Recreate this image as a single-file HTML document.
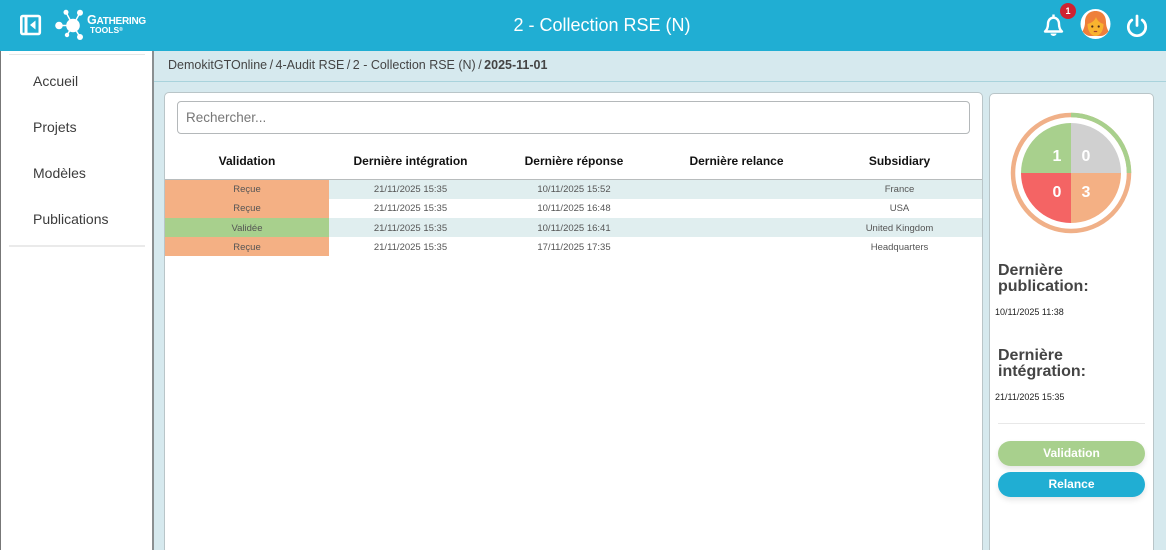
<!DOCTYPE html>
<html lang="fr"><head><meta charset="utf-8"><title>2 - Collection RSE (N)</title>
<style>
*{box-sizing:border-box}
html,body{margin:0;padding:0;width:1166px;height:550px;overflow:hidden;background:#d6e9ee;font-family:"Liberation Sans",sans-serif}
#w{position:relative;width:1166px;height:550px;overflow:hidden;background:#d6e9ee}
.a{position:absolute}
.top{left:0;top:0;width:1166px;height:51px;background:#20aed3}
.title{left:0;top:14px;width:1204px;text-align:center;color:#fff;font-size:18px;line-height:22px}
.side{left:1px;top:51px;width:153px;height:499px;background:#fff;border-right:2px solid #8a8f91}
.edge{left:0;top:51px;width:1px;height:499px;background:#777}
.nav{left:33px;color:#3c3c3c;font-size:14px;line-height:18px}
.crumb{left:168px;top:58px;font-size:12.5px;line-height:15px;color:#444;white-space:nowrap}
.crumb i{font-style:normal;margin:0 -1px}
.crumbline{left:154px;top:81px;width:1012px;height:1px;background:#a9d3dc}
.card{background:#fff;border:1px solid #b9c5c8;border-radius:5px}
.search{left:177px;top:101px;width:793px;height:33px;border:1px solid #b4b8ba;border-radius:4px;padding-left:8px;font-size:13.5px;line-height:31px;color:#777}
.th{top:154px;text-align:center;font-weight:bold;font-size:12px;line-height:15px;color:#111}
.row{left:165px;width:817px;height:19px}
.c{position:absolute;top:0;height:19px;overflow:hidden;text-align:center;font-size:9.5px;line-height:19px;color:#555;white-space:nowrap}
.low .c{line-height:21px}
h4{position:absolute;margin:0;left:998px;font-size:16px;line-height:16px;font-weight:bold;color:#444}
.d{left:995px;font-size:9px;line-height:12px;color:#222}
.btn{left:998px;width:147px;height:25px;border-radius:13px;color:#fff;text-align:center;font-size:12px;font-weight:bold;line-height:25px;box-shadow:0 3px 6px rgba(0,0,0,.1)}
</style></head><body><div id="w">
<div class="a top"></div>
<svg class="a" style="left:19px;top:14px" width="23" height="22" viewBox="0 0 23 22"><rect x="2.300" y="2" width="18.500" height="18" rx="1.500" fill="none" stroke="#fff" stroke-width="2.600"/><rect x="5.500" y="3" width="3" height="16" fill="#fff"/><path d="M16.500 6.500v9L11 11z" fill="#fff"/></svg>
<svg class="a" style="left:54px;top:9px" width="34" height="32" viewBox="0 0 34 32"><g stroke="#fff" stroke-width="1.500"><path d="M19 16.500L5 16.500M19 16.500L26 3.700M19 16.500L12 3.300M19 16.500L26 28M19 16.500L13 26"/></g><g fill="#fff"><circle cx="19" cy="16.500" r="6.800"/><circle cx="5" cy="16.500" r="3.800"/><circle cx="26" cy="3.700" r="3"/><circle cx="12" cy="3.300" r="2.500"/><circle cx="26" cy="28" r="3"/><circle cx="13" cy="26" r="2.200"/></g></svg>
<div class="a" style="left:87px;top:15px;color:#fff;font-weight:bold;font-size:10px;line-height:11px;letter-spacing:-.25px;white-space:nowrap"><span style="font-size:12.500px">G</span>ATHERING</div>
<div class="a" style="left:90px;top:25px;color:#fff;font-weight:bold;font-size:8.500px;line-height:10px;white-space:nowrap">TOOLS<span style="font-size:5px;vertical-align:top">®</span></div>
<div class="a title">2 - Collection RSE (N)</div>
<svg class="a" style="left:1042px;top:13px" width="23" height="24" viewBox="0 0 23 24"><path d="M3 18.500c2.300-2 3-4 3-7.500 0-3.800 2.300-6.300 5.500-6.300S17 7.200 17 11c0 3.500.7 5.500 3 7.500z" fill="none" stroke="#fff" stroke-width="2.400" stroke-linejoin="round"/><path d="M8.500 20.500a3 2.500 0 0 0 6 0z" fill="#fff"/><rect x="10.300" y="1.500" width="2.400" height="3.500" fill="#fff"/></svg>
<div class="a" style="left:1060px;top:3px;width:16px;height:16px;border-radius:50%;background:#cf2231;color:#fff;font-size:9px;font-weight:bold;text-align:center;line-height:16px">1</div>
<svg class="a" style="left:1080px;top:9px" width="31" height="30" viewBox="0 0 31 30"><circle cx="15.500" cy="15" r="15" fill="#fff"/><path d="M15.500 2C8.500 2 5 7 5 13c0 4.500-1.500 7-2.500 9.500C5 25.500 8 27 10 27h11c2 0 5-1.500 7.500-4.500C27.500 20 26 17.500 26 13c0-6-3.500-11-10.500-11z" fill="#ee7f3a"/><path d="M7.500 15c0 7.500 4 12 8 12s8-4.500 8-12c-3.500-1-6.500-3.500-7.500-7-1 3.500-4.500 6-8.500 7z" fill="#f9b32f"/><circle cx="12.300" cy="17.500" r="1.100" fill="#4b2a1a"/><circle cx="18.700" cy="17.500" r="1.100" fill="#4b2a1a"/><path d="M13.800 22.500h3.400" stroke="#a8442a" stroke-width="1.200"/></svg>
<svg class="a" style="left:1126px;top:13px" width="22" height="24" viewBox="0 0 22 24"><path d="M11 3v9.500" stroke="#fff" stroke-width="2.700" stroke-linecap="round" fill="none"/><path d="M5.800 7a8.700 8.700 0 1 0 10.400 0" stroke="#fff" stroke-width="2.700" stroke-linecap="round" fill="none"/></svg>

<div class="a edge"></div>
<div class="a side"></div>
<div class="a" style="left:9px;top:54px;width:136px;height:1px;background:#e6e6e6"></div>
<div class="a nav" style="top:72px">Accueil</div>
<div class="a nav" style="top:118px">Projets</div>
<div class="a nav" style="top:164px">Modèles</div>
<div class="a nav" style="top:210px">Publications</div>
<div class="a" style="left:9px;top:245px;width:136px;height:2px;background:#eaeaea"></div>

<div class="a crumb">DemokitGTOnline <i>/</i> 4-Audit RSE <i>/</i> 2 - Collection RSE (N) <i>/</i> <b>2025-11-01</b></div>
<div class="a crumbline"></div>

<div class="a card" style="left:164px;top:92px;width:819px;height:470px"></div>
<div class="a search">Rechercher...</div>
<div class="a th" style="left:165px;width:164px">Validation</div>
<div class="a th" style="left:329px;width:163px">Dernière intégration</div>
<div class="a th" style="left:492px;width:164px">Dernière réponse</div>
<div class="a th" style="left:656px;width:161px">Dernière relance</div>
<div class="a th" style="left:817px;width:165px">Subsidiary</div>
<div class="a" style="left:165px;top:179px;width:817px;height:1px;background:#b8bcbd"></div>

<div class="a row" style="top:180px;background:#e0eeef"><div class="c" style="left:0;width:164px;background:#f4b084">Reçue</div><div class="c" style="left:164px;width:163px">21/11/2025 15:35</div><div class="c" style="left:327px;width:164px">10/11/2025 15:52</div><div class="c" style="left:652px;width:165px">France</div></div>
<div class="a row" style="top:199px;background:#fff"><div class="c" style="left:0;width:164px;background:#f4b084">Reçue</div><div class="c" style="left:164px;width:163px">21/11/2025 15:35</div><div class="c" style="left:327px;width:164px">10/11/2025 16:48</div><div class="c" style="left:652px;width:165px">USA</div></div>
<div class="a row low" style="top:218px;background:#e0eeef"><div class="c" style="left:0;width:164px;background:#a8d08d">Validée</div><div class="c" style="left:164px;width:163px">21/11/2025 15:35</div><div class="c" style="left:327px;width:164px">10/11/2025 16:41</div><div class="c" style="left:652px;width:165px">United Kingdom</div></div>
<div class="a row low" style="top:237px;background:#fff"><div class="c" style="left:0;width:164px;background:#f4b084">Reçue</div><div class="c" style="left:164px;width:163px">21/11/2025 15:35</div><div class="c" style="left:327px;width:164px">17/11/2025 17:35</div><div class="c" style="left:652px;width:165px">Headquarters</div></div>

<div class="a card" style="left:989px;top:93px;width:165px;height:470px"></div>
<svg class="a" style="left:1010px;top:112px" width="122" height="122" viewBox="0 0 122 122">
<circle cx="61" cy="61" r="58" fill="none" stroke="#f0b088" stroke-width="4.500"/>
<path d="M61 3a58 58 0 0 1 58 58" fill="none" stroke="#a8d08d" stroke-width="4.500"/>
<path d="M61 61V11a50 50 0 0 0-50 50z" fill="#a8d08d"/>
<path d="M61 61V11a50 50 0 0 1 50 50z" fill="#d0d0d0"/>
<path d="M61 61H11a50 50 0 0 0 50 50z" fill="#f46464"/>
<path d="M61 61H111a50 50 0 0 1-50 50z" fill="#f4b084"/>
<g fill="#fff" font-family="Liberation Sans" font-size="16" font-weight="bold" text-anchor="middle"><text x="47" y="49">1</text><text x="76" y="49">0</text><text x="47" y="85">0</text><text x="76" y="85">3</text></g>
</svg>
<h4 style="top:263px">Dernière<br>publication:</h4>
<div class="a d" style="top:306px">10/11/2025 11:38</div>
<h4 style="top:348px">Dernière<br>intégration:</h4>
<div class="a d" style="top:391px">21/11/2025 15:35</div>
<div class="a" style="left:998px;top:423px;width:147px;height:1px;background:#e8e8e8"></div>
<div class="a btn" style="top:441px;background:#a8d08d">Validation</div>
<div class="a btn" style="top:472px;background:#20aed3">Relance</div>
</div></body></html>
